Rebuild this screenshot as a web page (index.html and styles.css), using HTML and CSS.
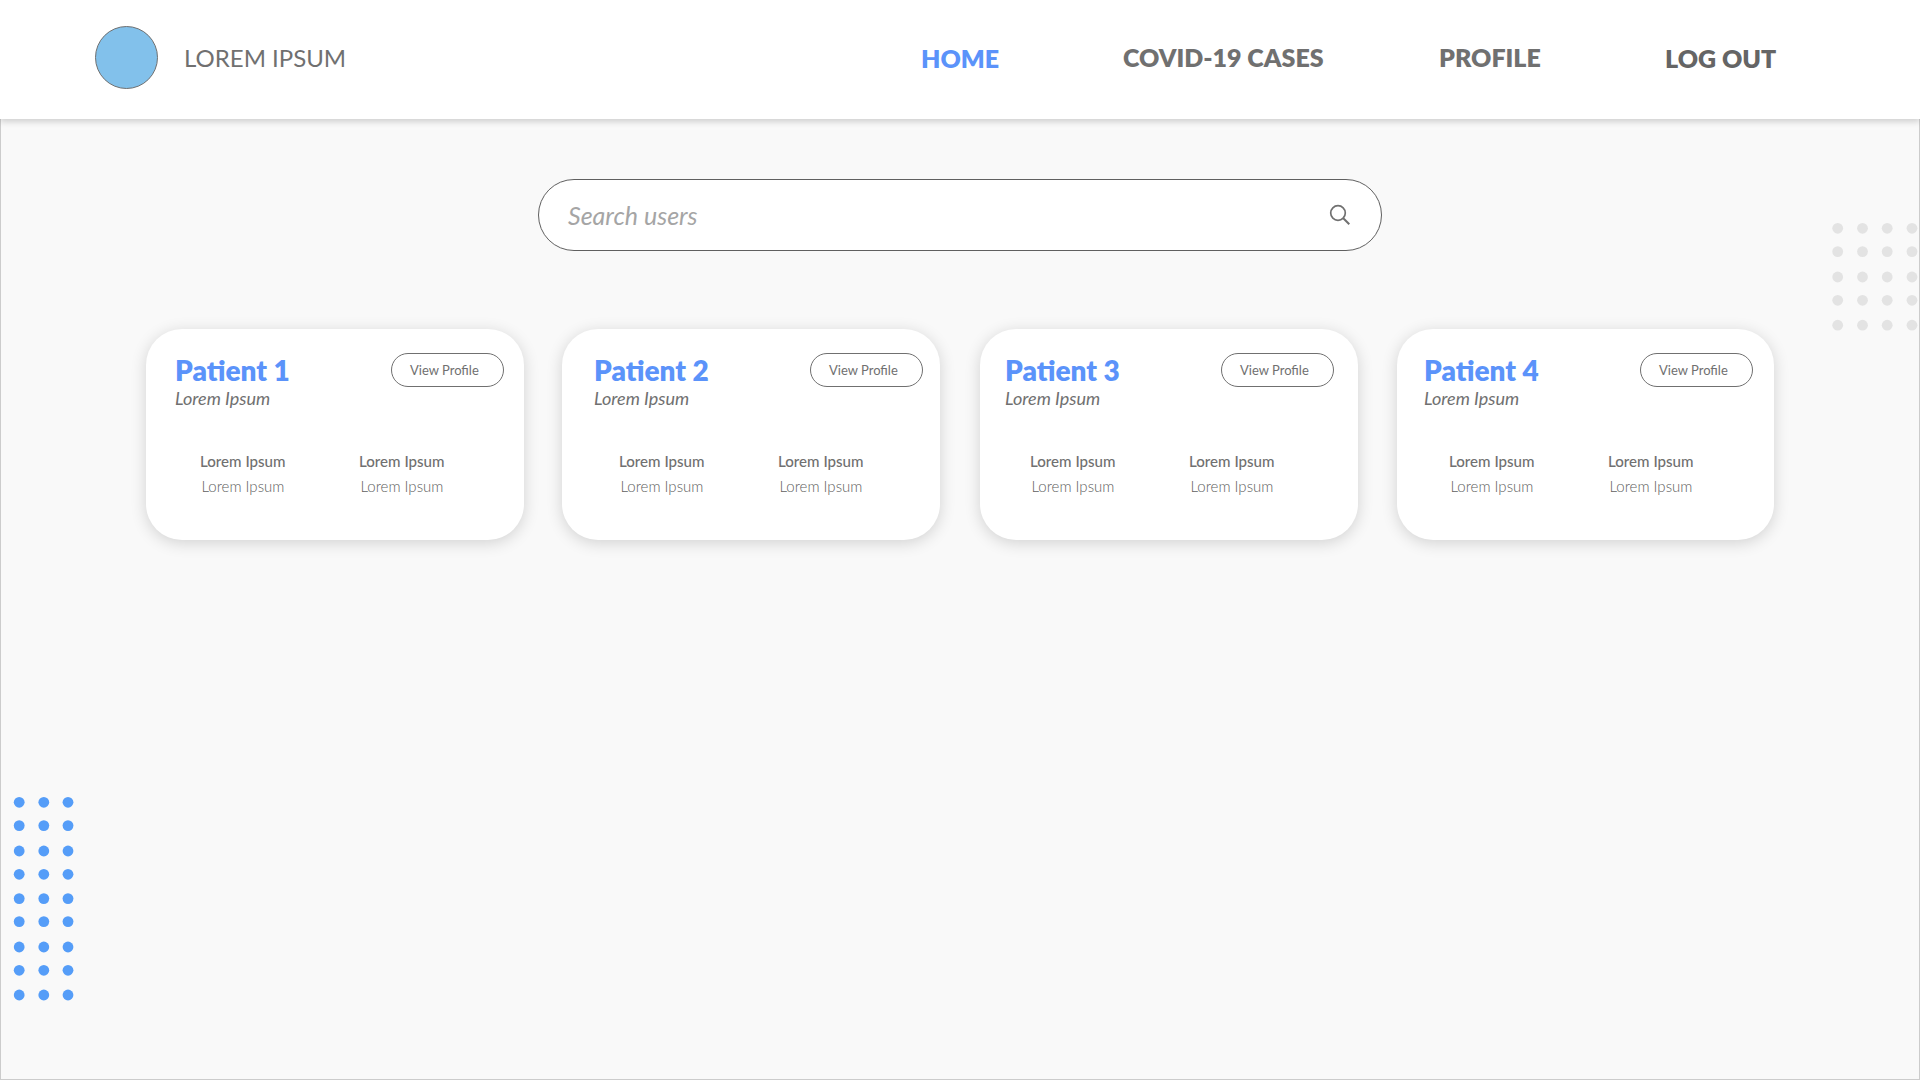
FILE: index.html
```html
<!DOCTYPE html>
<html lang="en">
<head>
<meta charset="utf-8">
<title>Patients</title>
<link rel="stylesheet" href="styles.css">
</head>
<body>
<header class="header">
  <div class="logo"></div>
  <div class="brand">LOREM IPSUM</div>
  <nav class="nav">
    <a class="nav-link home">HOME</a>
    <a class="nav-link cases">COVID-19 CASES</a>
    <a class="nav-link profile">PROFILE</a>
    <a class="nav-link logout">LOG OUT</a>
  </nav>
</header>
<main class="main">
  <div class="search">
    <span class="search-text">Search users</span>
    <svg class="search-icon" width="22" height="22" viewBox="0 0 22 22" fill="none" stroke="#707070"><circle cx="9" cy="9" r="7.3" stroke-width="1.7"/><path d="M14 14L20.3 20.3" stroke-width="2"/></svg>
  </div>
  <section class="cards">
    <article class="card card-1">
      <div class="top"><div><h2 class="name">Patient 1</h2><p class="sub">Lorem Ipsum</p></div><a class="view">View Profile</a></div>
      <div class="facts"><div class="fact"><b class="label">Lorem Ipsum</b><span class="value">Lorem Ipsum</span></div><div class="fact"><b class="label">Lorem Ipsum</b><span class="value">Lorem Ipsum</span></div></div>
    </article>
    <article class="card card-2">
      <div class="top"><div><h2 class="name">Patient 2</h2><p class="sub">Lorem Ipsum</p></div><a class="view">View Profile</a></div>
      <div class="facts"><div class="fact"><b class="label">Lorem Ipsum</b><span class="value">Lorem Ipsum</span></div><div class="fact"><b class="label">Lorem Ipsum</b><span class="value">Lorem Ipsum</span></div></div>
    </article>
    <article class="card card-3">
      <div class="top"><div><h2 class="name">Patient 3</h2><p class="sub">Lorem Ipsum</p></div><a class="view">View Profile</a></div>
      <div class="facts"><div class="fact"><b class="label">Lorem Ipsum</b><span class="value">Lorem Ipsum</span></div><div class="fact"><b class="label">Lorem Ipsum</b><span class="value">Lorem Ipsum</span></div></div>
    </article>
    <article class="card card-4">
      <div class="top"><div><h2 class="name">Patient 4</h2><p class="sub">Lorem Ipsum</p></div><a class="view">View Profile</a></div>
      <div class="facts"><div class="fact"><b class="label">Lorem Ipsum</b><span class="value">Lorem Ipsum</span></div><div class="fact"><b class="label">Lorem Ipsum</b><span class="value">Lorem Ipsum</span></div></div>
    </article>
  </section>
  <svg class="dots dots-right" width="88" height="114" viewBox="0 0 88 114" fill="#e3e3e3">
    <defs><g id="row4"><circle cx="5.7" r="5.4"/><circle cx="30.5" r="5.4"/><circle cx="55.2" r="5.4"/><circle cx="80" r="5.4"/></g></defs>
    <use href="#row4" y="6.3"/><use href="#row4" y="29.6"/><use href="#row4" y="55"/><use href="#row4" y="78.3"/><use href="#row4" y="103.2"/>
  </svg>
  <svg class="dots dots-left" width="64" height="210" viewBox="0 0 64 210" fill="#559df8">
    <defs><g id="row3"><circle cx="7.2" r="5.4"/><circle cx="31.8" r="5.4"/><circle cx="56" r="5.4"/></g></defs>
    <use href="#row3" y="6.3"/><use href="#row3" y="29.6"/><use href="#row3" y="55"/><use href="#row3" y="78.3"/><use href="#row3" y="102.6"/><use href="#row3" y="125.6"/><use href="#row3" y="151"/><use href="#row3" y="174.3"/><use href="#row3" y="199"/>
  </svg>
</main>
</body>
</html>
```
FILE: styles.css
```css
* { box-sizing: border-box; }
body {
  margin: 0;
  height: 1080px;
  display: flex;
  flex-direction: column;
  overflow: hidden;
  font-family: Lato, sans-serif;
  color: #707070;
  background: #f9f9f9;
}
.header {
  height: 119px;
  flex: none;
  display: flex;
  padding-left: 95px;
  background: #fff;
  box-shadow: 0 3px 6px rgba(0, 0, 0, .16);
  z-index: 1;
}
.logo {
  width: 63px;
  height: 63px;
  margin-top: 26px;
  border: 1px solid #707070;
  border-radius: 50%;
  background: #82c1eb;
}
.brand {
  width: 737px;
  margin: 43px 0 0 26px;
  font-size: 24px;
  line-height: 30px;
}
.nav {
  display: flex;
  padding-top: 42px;
}
.nav-link {
  font-size: 25px;
  line-height: 30px;
  font-weight: 800;
  white-space: nowrap;
}
.home { width: 202px; padding-top: 1px; color: #5b93fa; }
.cases { width: 316px; }
.profile { width: 226px; }
.logout { padding-top: 1px; color: #656565; }
.main {
  flex: 1;
  position: relative;
  border: 1px solid #ccc;
  border-top: 0;
}
.search {
  width: 844px;
  height: 72px;
  margin: 60px auto 0;
  padding: 0 30px 0 29px;
  display: flex;
  justify-content: space-between;
  align-items: center;
  border: 1px solid #606060;
  border-radius: 36px;
  background: #fff;
}
.search-text {
  font-size: 25px;
  font-style: italic;
  color: #a5a5a5;
}
.cards {
  display: grid;
  grid-template-columns: repeat(3, 378px) 377px;
  column-gap: 39px;
  margin: 78px 0 0 145px;
}
.card {
  height: 211px;
  padding: 24px 0 0 29px;
  border-radius: 36px;
  background: #fff;
  box-shadow: 0 3px 16px rgba(0, 0, 0, .16);
}
.card-2 { width: 378px; margin-left: -1px; padding-left: 32px; }
.card-3 { padding-left: 25px; }
.card-4 { padding-left: 27px; }
.top { display: flex; }
.top > div { width: 216px; }
.name {
  margin: -1px 0 0;
  font-size: 28px;
  line-height: 36px;
  font-weight: 800;
  color: #5b93fa;
}
.sub {
  margin: -1px 0 0;
  font-size: 18px;
  line-height: 22px;
  font-style: italic;
}
.view {
  width: 113px;
  height: 34px;
  padding-left: 18px;
  border: 1px solid #707070;
  border-radius: 17px;
  font-size: 13px;
  line-height: 33px;
}
.facts {
  display: flex;
  padding: 40px 0 0 25px;
}
.fact {
  width: 159px;
  display: flex;
  flex-direction: column;
}
.label {
  font-size: 15.1px;
  line-height: 25px;
  font-weight: 500;
}
.value {
  padding-left: 1.5px;
  font-size: 15px;
  line-height: 25px;
  font-weight: 300;
  color: #606060;
}
.dots { position: absolute; }
.dots-right { left: 1831px; top: 103px; }
.dots-left { left: 11px; top: 677px; }
```
